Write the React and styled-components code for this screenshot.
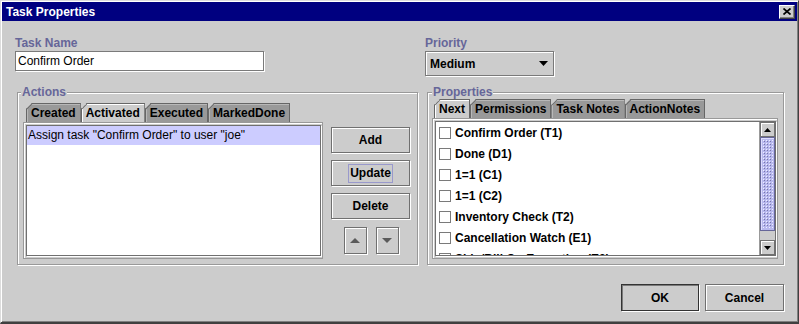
import React from 'react';
import styled, { createGlobalStyle } from 'styled-components';

const GlobalStyle = createGlobalStyle`
  html, body {
    margin: 0;
    padding: 0;
    background: #cccccc;
  }
  body {
    font-family: "Liberation Sans", Arial, sans-serif;
    font-size: 12px;
    color: #000000;
  }
  * {
    box-sizing: border-box;
  }
`;

const Frame = styled.div`
  width: 799px;
  height: 324px;
  display: flex;
  flex-direction: column;
  background: #cccccc;
  border: 1px solid;
  border-color: #dcdcdc #404040 #404040 #dcdcdc;
  border-bottom-width: 2px;
  padding: 1px;
  box-shadow: inset 1px 1px 0 #ffffff, inset -1px -1px 0 #808080;
`;

const TitleBar = styled.div`
  height: 19px;
  flex: none;
  display: flex;
  align-items: center;
  justify-content: space-between;
  padding: 0 2px 0 4px;
  background: #000080;
  color: #ffffff;
  font-weight: bold;
  font-size: 12px;
`;

const CloseButton = styled.div`
  width: 16px;
  height: 14px;
  display: flex;
  align-items: center;
  justify-content: center;
  background: #cccccc;
  border: 1px solid;
  border-color: #ffffff #404040 #404040 #ffffff;
  box-shadow: inset -1px -1px 0 #808080;
`;

const Body = styled.div`
  flex: 1;
  display: flex;
  flex-direction: column;
  padding: 15px 13px 10px 13px;
`;

const Columns = styled.div`
  display: grid;
  grid-template-columns: 403px 359px;
  column-gap: 7px;
  margin-top: ${p => p.$gap || 0}px;
`;

const Field = styled.div`
  display: flex;
  flex-direction: column;
  align-items: flex-start;
  gap: 1px;
`;

const Label = styled.div`
  color: #666699;
  font-weight: bold;
  line-height: 14px;
`;

const TextInput = styled.input`
  width: 249px;
  height: 20px;
  padding: 0 2px;
  border: 1px solid #7a7a7a;
  box-shadow: 1px 1px 0 #ffffff;
  background: #ffffff;
  font: 12px "Liberation Sans", Arial, sans-serif;
  color: #000000;
  outline: none;
`;

const Combo = styled.div`
  width: 129px;
  height: 25px;
  display: flex;
  align-items: center;
  justify-content: space-between;
  padding: 0 5px 0 4px;
  border: 1px solid #7a7a7a;
  box-shadow: inset 1px 1px 0 #ffffff, 1px 1px 0 #ffffff;
  background: #cccccc;
  font-weight: bold;
`;

const Group = styled.fieldset`
  margin: 0 0 0 2px;
  min-width: 0;
  border: 1px solid #999999;
  box-shadow: inset 1px 1px 0 #ffffff, 1px 1px 0 #ffffff;
  padding: ${p => p.$pad};
`;

const Legend = styled.legend`
  margin-left: ${p => p.$shift}px;
  padding: 0 1px;
  color: #666699;
  font-weight: bold;
  line-height: 14px;
  background: #cccccc;
`;

const ActionsBody = styled.div`
  display: flex;
  gap: 8px;
`;

const TabArea = styled.div`
  width: ${p => p.$w || 'auto'};
  display: flex;
  flex-direction: column;
`;

const TabStrip = styled.div`
  display: flex;
  height: 19px;
  padding-left: ${p => p.$indent}px;
`;

const Tab = styled.div`
  position: relative;
  height: 19px;
  padding: 0 4px;
  display: flex;
  align-items: center;
  font-weight: bold;
  line-height: 14px;
  white-space: nowrap;
  background: ${p => (p.$active ? '#cccccc' : '#999999')};
  border: 1px solid #666666;
  border-bottom: 0;
  box-shadow: inset 1px 1px 0 ${p => (p.$active ? '#ffffff' : '#b8b8b8')};
  clip-path: polygon(6px 0, 100% 0, 100% 100%, 0 100%, 0 6px);

  &::before {
    content: '';
    position: absolute;
    left: -1px;
    top: 5px;
    width: 9px;
    height: 1px;
    background: #666666;
    transform-origin: 0 0;
    transform: rotate(-45deg);
  }
`;

const TabPanel = styled.div`
  height: ${p => p.$h}px;
  display: flex;
  padding: 2px 1px 2px 2px;
  border: 1px solid #999999;
  box-shadow: inset 1px 1px 0 #ffffff;
  background: #cccccc;
`;

const ListBox = styled.div`
  flex: 1;
  display: flex;
  min-width: 0;
  overflow: hidden;
  background: #ffffff;
  border: 1px solid #707070;
  box-shadow: 1px 1px 0 #ffffff;
`;

const Rows = styled.div`
  flex: 1;
  min-width: 0;
  overflow: hidden;
`;

const ActionRow = styled.div`
  height: 19px;
  line-height: 19px;
  padding-left: 1px;
  white-space: nowrap;
  background: ${p => (p.$selected ? '#ccccff' : 'transparent')};
`;

const ButtonColumn = styled.div`
  width: 80px;
  padding-top: 24px;
  display: flex;
  flex-direction: column;
  gap: 7px;
`;

const Button = styled.button`
  width: ${p => p.$w || 79}px;
  height: ${p => p.$h || 26}px;
  padding: 0;
  display: flex;
  align-items: center;
  justify-content: center;
  background: #cccccc;
  border: 1px solid ${p => (p.$primary ? '#333333' : '#707070')};
  box-shadow: inset 1px 1px 0 ${p => (p.$primary ? '#7a7a7a' : '#ffffff')}, 1px 1px 0 #ffffff;
  font: bold 12px "Liberation Sans", Arial, sans-serif;
  color: #000000;
`;

const Focus = styled.span`
  padding: 0 1px;
  line-height: 17px;
  border: 1px solid #9999cc;
`;

const ArrowRow = styled.div`
  margin-top: 1px;
  display: flex;
  justify-content: center;
  gap: 9px;
`;

const PropsBody = styled.div`
  display: flex;
  flex-direction: column;
`;

const CheckRow = styled.div`
  height: 21px;
  display: flex;
  align-items: center;
  gap: 4px;
  padding-left: 3px;
  font-weight: bold;
  white-space: nowrap;
`;

const CheckBox = styled.span`
  flex: none;
  width: 12px;
  height: 12px;
  border: 1px solid #7a7a7a;
  background: #ffffff;
`;

const ScrollBar = styled.div`
  flex: none;
  width: 16px;
  display: flex;
  flex-direction: column;
  background: #cccccc;
  border-left: 1px solid #999999;
`;

const ScrollButton = styled.div`
  height: 15px;
  flex: none;
  display: flex;
  align-items: center;
  justify-content: center;
  background: #cccccc;
  border: 1px solid #707070;
  box-shadow: inset 1px 1px 0 #ffffff;
`;

const Thumb = styled.div`
  height: 94px;
  flex: none;
  padding: 2px;
  background: #b8b8ee;
  border: 1px solid #666699;
  box-shadow: inset 1px 1px 0 #ddddff;
  overflow: hidden;

  svg {
    display: block;
  }
`;

const Track = styled.div`
  flex: 1;
  background: #cccccc;
`;

const Footer = styled.div`
  margin-top: 19px;
  display: flex;
  justify-content: flex-end;
  gap: 6px;
`;

const Triangle = ({ up, w, h, color }) => (
  <svg width={w} height={h} viewBox={`0 0 ${w} ${h}`}>
    <polygon
      points={up ? `0,${h} ${w / 2},0 ${w},${h}` : `0,0 ${w},0 ${w / 2},${h}`}
      fill={color}
    />
  </svg>
);

// Metal "bumps" texture on the scroll thumb
const Bumps = () => (
  <svg width="10" height="88">
    <defs>
      <pattern id="bumps" width="3" height="3" patternUnits="userSpaceOnUse">
        <rect x="0" y="0" width="1" height="1" fill="#eeeeff" />
        <rect x="1" y="1" width="1" height="1" fill="#7777aa" />
      </pattern>
    </defs>
    <rect width="10" height="88" fill="url(#bumps)" />
  </svg>
);

const actionTabs = ['Created', 'Activated', 'Executed', 'MarkedDone'];
const propTabs = ['Next', 'Permissions', 'Task Notes', 'ActionNotes'];
const nextItems = [
  'Confirm Order (T1)',
  'Done (D1)',
  '1=1 (C1)',
  '1=1 (C2)',
  'Inventory Check (T2)',
  'Cancellation Watch (E1)',
  'Ship/Bill On Exception (E2)',
];

const App = () => {
  return (
    <>
      <GlobalStyle />
      <Frame>
        <TitleBar>
          <span>Task Properties</span>
          <CloseButton>
            <svg width="8" height="7" viewBox="0 0 8 7">
              <path d="M0.5 0.5 L7.5 6.5 M7.5 0.5 L0.5 6.5" stroke="#000" strokeWidth="1.7" />
            </svg>
          </CloseButton>
        </TitleBar>
        <Body>
          <Columns>
            <Field>
              <Label>Task Name</Label>
              <TextInput defaultValue="Confirm Order" readOnly />
            </Field>
            <Field>
              <Label>Priority</Label>
              <Combo>
                <span>Medium</span>
                <Triangle w={9} h={5} color="#000000" />
              </Combo>
            </Field>
          </Columns>

          <Columns $gap={9}>
            <Group $pad="4px 6px 5px 5px">
              <Legend $shift={-2}>Actions</Legend>
              <ActionsBody>
                <TabArea $w="300px">
                  <TabStrip $indent={3}>
                    {actionTabs.map(t => (
                      <Tab key={t} $active={t === 'Activated'}>{t}</Tab>
                    ))}
                  </TabStrip>
                  <TabPanel $h={137}>
                    <ListBox>
                      <Rows>
                        <ActionRow $selected>Assign task "Confirm Order" to user "joe"</ActionRow>
                      </Rows>
                    </ListBox>
                  </TabPanel>
                </TabArea>
                <ButtonColumn>
                  <Button>Add</Button>
                  <Button><Focus>Update</Focus></Button>
                  <Button>Delete</Button>
                  <ArrowRow>
                    <Button $w={23} $h={27}><Triangle up w={10} h={5} color="#5a5a5a" /></Button>
                    <Button $w={23} $h={27}><Triangle w={10} h={5} color="#5a5a5a" /></Button>
                  </ArrowRow>
                </ButtonColumn>
              </ActionsBody>
            </Group>

            <Group $pad="0 5px 5px 4px">
              <Legend $shift={0}>Properties</Legend>
              <PropsBody>
                <TabStrip $indent={2}>
                  {propTabs.map(t => (
                    <Tab key={t} $active={t === 'Next'}>{t}</Tab>
                  ))}
                </TabStrip>
                <TabPanel $h={141}>
                  <ListBox>
                    <Rows>
                      {nextItems.map(item => (
                        <CheckRow key={item}>
                          <CheckBox />
                          {item}
                        </CheckRow>
                      ))}
                    </Rows>
                    <ScrollBar>
                      <ScrollButton><Triangle up w={7} h={4} color="#000000" /></ScrollButton>
                      <Thumb><Bumps /></Thumb>
                      <Track />
                      <ScrollButton><Triangle w={7} h={4} color="#000000" /></ScrollButton>
                    </ScrollBar>
                  </ListBox>
                </TabPanel>
              </PropsBody>
            </Group>
          </Columns>

          <Footer>
            <Button $primary $w={78} $h={27}>OK</Button>
            <Button $w={79} $h={27}>Cancel</Button>
          </Footer>
        </Body>
      </Frame>
    </>
  );
};

export default App;
